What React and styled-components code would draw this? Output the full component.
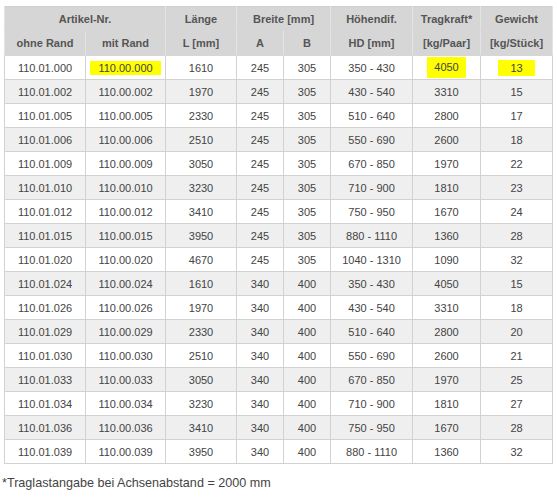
import React from 'react';
import styled, { createGlobalStyle } from 'styled-components';

const GlobalStyle = createGlobalStyle`
  body {
    margin: 0;
    background: #fff;
    font-family: "Liberation Sans", Arial, sans-serif;
  }
`;

const Page = styled.div`
  padding: 6px 0 0 2px;
  width: 557px;
  box-sizing: border-box;
`;

const Table = styled.table`
  margin-left: 2px;
  width: 548px;
  border-collapse: collapse;
  table-layout: fixed;
  font-size: 11px;
  color: #444;
  border: 1px solid #cfcfcf;
`;

const Th = styled.th`
  background: #d6d6d6;
  color: #555;
  font-weight: bold;
  height: ${(p) => (p.$top ? 23 : 24)}px;
  padding: 0;
  text-align: center;
  border-left: 1px solid #e4e4e4;
  border-right: 1px solid #e4e4e4;
  border-bottom: 1px solid #d6d6d6;
  vertical-align: middle;
`;

const Row = styled.tr`
  background: ${(p) => (p.$alt ? '#efefef' : '#ffffff')};
`;

const Td = styled.td`
  height: 23px;
  padding: 0;
  text-align: center;
  border: 1px solid #d2d2d2;
  vertical-align: middle;
`;

const Mark = styled.span`
  display: inline-block;
  background: #ffff00;
  padding: ${(p) => p.$pad || '2px 8px'};
`;

const Note = styled.p`
  margin: 12px 0 0;
  font-size: 12.6px;
  color: #444;
`;

const widths = [81, 80, 71, 47, 47, 82, 68, 72];

const rows = [
  ['110.01.000', '110.00.000', '1610', '245', '305', '350 - 430', '4050', '13'],
  ['110.01.002', '110.00.002', '1970', '245', '305', '430 - 540', '3310', '15'],
  ['110.01.005', '110.00.005', '2330', '245', '305', '510 - 640', '2800', '17'],
  ['110.01.006', '110.00.006', '2510', '245', '305', '550 - 690', '2600', '18'],
  ['110.01.009', '110.00.009', '3050', '245', '305', '670 - 850', '1970', '22'],
  ['110.01.010', '110.00.010', '3230', '245', '305', '710 - 900', '1810', '23'],
  ['110.01.012', '110.00.012', '3410', '245', '305', '750 - 950', '1670', '24'],
  ['110.01.015', '110.00.015', '3950', '245', '305', '880 - 1110', '1360', '28'],
  ['110.01.020', '110.00.020', '4670', '245', '305', '1040 - 1310', '1090', '32'],
  ['110.01.024', '110.00.024', '1610', '340', '400', '350 - 430', '4050', '15'],
  ['110.01.026', '110.00.026', '1970', '340', '400', '430 - 540', '3310', '18'],
  ['110.01.029', '110.00.029', '2330', '340', '400', '510 - 640', '2800', '20'],
  ['110.01.030', '110.00.030', '2510', '340', '400', '550 - 690', '2600', '21'],
  ['110.01.033', '110.00.033', '3050', '340', '400', '670 - 850', '1970', '25'],
  ['110.01.034', '110.00.034', '3230', '340', '400', '710 - 900', '1810', '27'],
  ['110.01.036', '110.00.036', '3410', '340', '400', '750 - 950', '1670', '28'],
  ['110.01.039', '110.00.039', '3950', '340', '400', '880 - 1110', '1360', '32'],
];

// highlighted cells in the first row: column index -> padding
const marks = { 1: '1px 8px', 6: '4px 7px 5px', 7: '2px 12px' };

export default function App() {
  return (
    <Page>
      <GlobalStyle />
      <Table>
        <colgroup>
          {widths.map((w, i) => (
            <col key={i} style={{ width: w }} />
          ))}
        </colgroup>
        <thead>
          <tr>
            <Th $top colSpan={2}>Artikel-Nr.</Th>
            <Th $top>Länge</Th>
            <Th $top colSpan={2}>Breite [mm]</Th>
            <Th $top>Höhendif.</Th>
            <Th $top>Tragkraft*</Th>
            <Th $top>Gewicht</Th>
          </tr>
          <tr>
            <Th>ohne Rand</Th>
            <Th>mit Rand</Th>
            <Th>L [mm]</Th>
            <Th>A</Th>
            <Th>B</Th>
            <Th>HD [mm]</Th>
            <Th>[kg/Paar]</Th>
            <Th>[kg/Stück]</Th>
          </tr>
        </thead>
        <tbody>
          {rows.map((r, ri) => (
            <Row key={ri} $alt={ri % 2 === 1}>
              {r.map((c, ci) => (
                <Td key={ci}>
                  {ri === 0 && marks[ci] ? <Mark $pad={marks[ci]}>{c}</Mark> : c}
                </Td>
              ))}
            </Row>
          ))}
        </tbody>
      </Table>
      <Note>*Traglastangabe bei Achsenabstand = 2000 mm</Note>
    </Page>
  );
}
